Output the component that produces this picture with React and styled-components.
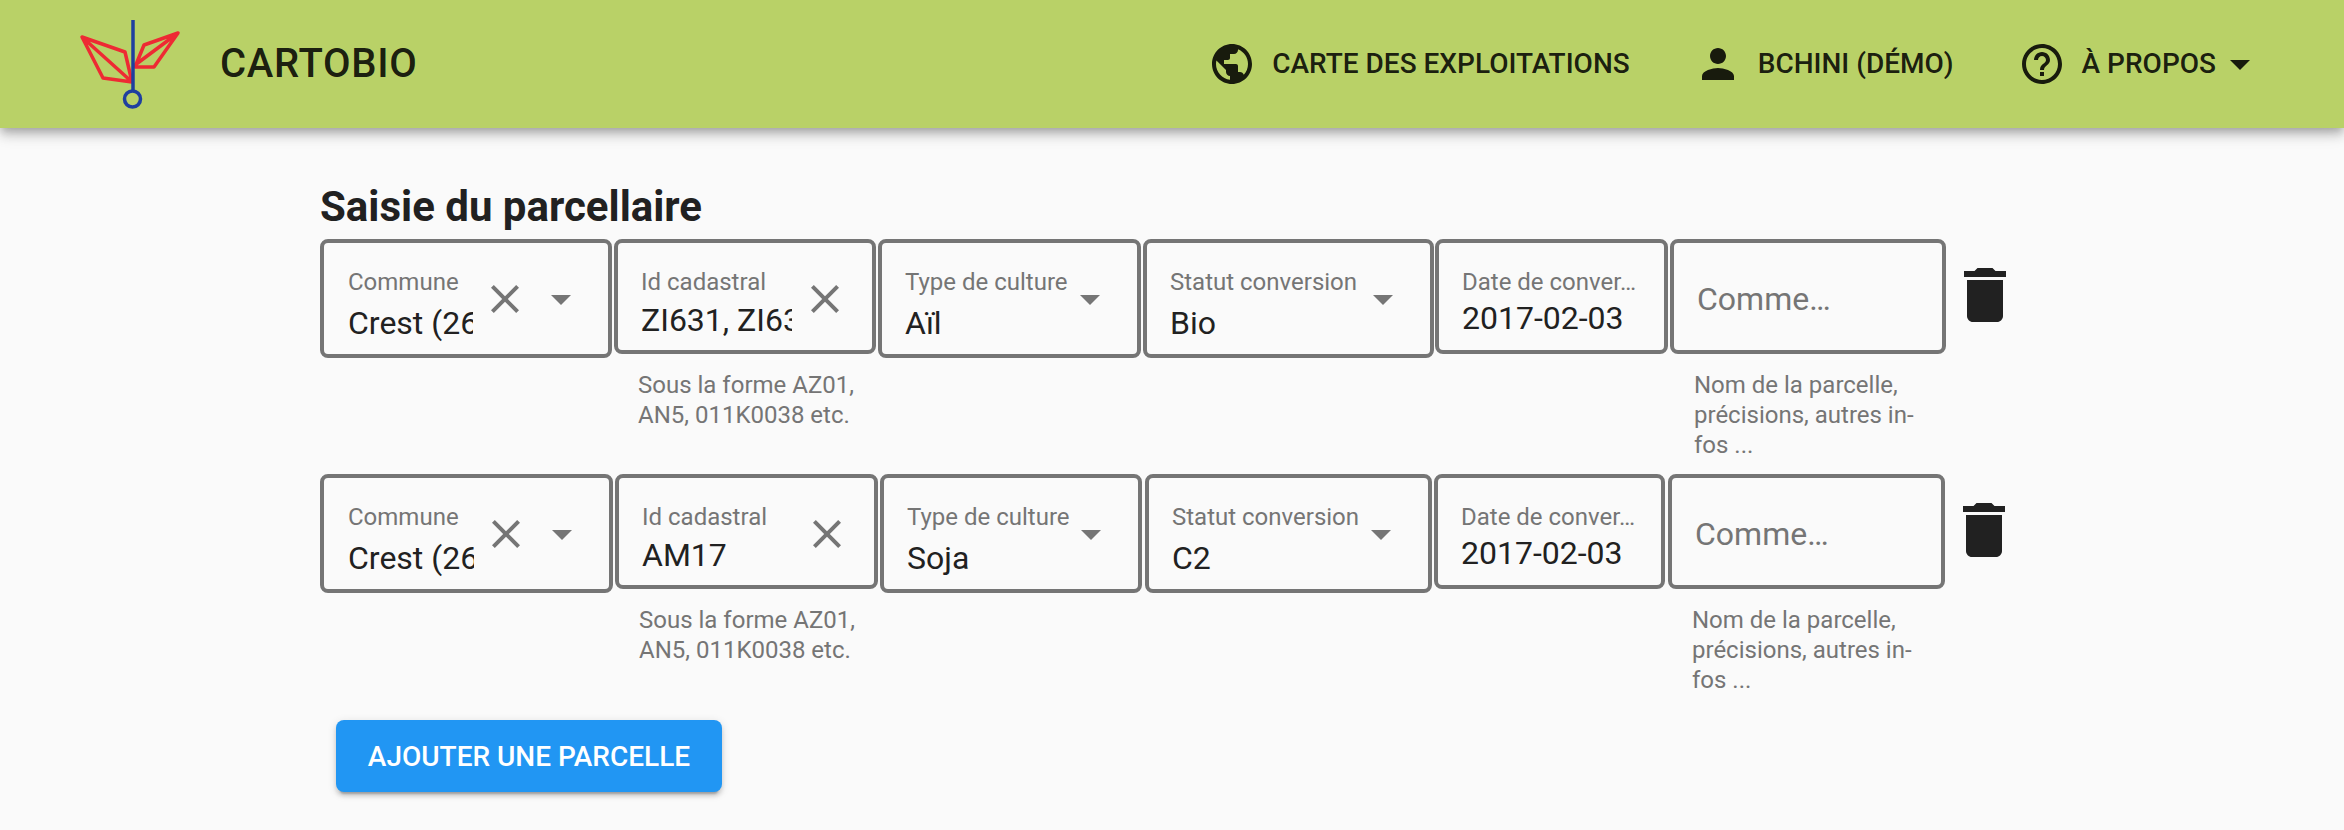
import { styled, createGlobalStyle } from "styled-components";

const GlobalStyle = createGlobalStyle`
html, body {
  margin: 0;
  padding: 0;
  background-color: #fafafa;
  font-family: Roboto, "Liberation Sans", sans-serif;
}
`;

const Page = styled.div`
width: 2344px;
height: 830px;
overflow: hidden;
`;

const Header = styled.header`
display: flex;
align-items: center;
height: 128px;
padding: 0 80px 0 60px;
box-sizing: border-box;
background-color: #b9d167;
color: rgba(0, 0, 0, 0.87);
box-shadow: 0 4px 8px -2px rgba(0, 0, 0, 0.2), 0 8px 10px 0 rgba(0, 0, 0, 0.14), 0 2px 20px 0 rgba(0, 0, 0, 0.12);
`;

const Logo = styled.svg`
width: 140px;
height: 110px;
flex: none;
margin-top: 2px;
`;

const Brand = styled.div`
margin-left: 20px;
font-size: 40px;
font-weight: 500;
letter-spacing: 0.7px;
line-height: 48px;
`;

const Nav = styled.nav`
display: flex;
align-items: center;
gap: 64px;
margin-left: auto;
`;

const NavItem = styled.div`
display: flex;
align-items: center;
gap: ${(p) => p.$gap}px;
font-size: 28px;
font-weight: 500;
line-height: 48px;
white-space: nowrap;
`;

const NavCaret = styled.svg`
width: 48px;
height: 48px;
margin-left: -16px;
fill: currentColor;
`;

const Icon = styled.svg`
width: 48px;
height: 48px;
flex: none;
fill: currentColor;
`;

const Main = styled.main`
padding: 53px 0 0 320px;
`;

const Title = styled.h1`
margin: 0 0 6px;
font-size: 42px;
font-weight: 700;
line-height: 52px;
color: #212121;
`;

const Row = styled.div`
display: flex;
align-items: flex-start;
margin-bottom: 14px;
`;

const FieldWrap = styled.div`
flex: none;
width: ${(p) => p.$w}px;
margin-left: ${(p) => p.$ml || 0}px;
`;

const Field = styled.div`
display: flex;
box-sizing: border-box;
height: ${(p) => p.$h}px;
padding: 0 23px 0 ${(p) => p.$pl || 23}px;
border: 4px solid #757575;
border-radius: 8px;
`;

const TextColumn = styled.div`
flex: 1;
min-width: 0;
overflow: hidden;
padding-top: 25px;
`;

const Label = styled.div`
font-size: 24px;
line-height: 28px;
color: #757575;
white-space: nowrap;
`;

const Value = styled.div`
margin-top: ${(p) => p.$mt}px;
font-size: 32px;
line-height: 38px;
color: #212121;
white-space: nowrap;
overflow: hidden;
`;

const Placeholder = styled.div`
padding-top: 37px;
font-size: 32px;
line-height: 38px;
color: #757575;
white-space: nowrap;
`;

const FieldIcon = styled.svg`
flex: none;
width: 48px;
height: 48px;
margin-top: 32px;
margin-left: ${(p) => p.$ml || 0}px;
fill: #757575;
`;

const Helper = styled.div`
margin-top: 16px;
padding: 0 12px 0 24px;
font-size: 24px;
line-height: 30px;
color: #757575;
`;

const TrashButton = styled.svg`
flex: none;
width: 72px;
height: 72px;
margin: 20px 0 0 3px;
fill: #212121;
`;

const AddButton = styled.button`
display: block;
box-sizing: border-box;
width: 386px;
height: 72px;
margin: 25px 0 0 16px;
padding: 0;
border: none;
border-radius: 8px;
background-color: #2196f3;
color: #ffffff;
font-family: inherit;
font-size: 28px;
font-weight: 500;
box-shadow: 0 6px 2px -4px rgba(0, 0, 0, 0.2), 0 4px 4px 0 rgba(0, 0, 0, 0.14), 0 2px 10px 0 rgba(0, 0, 0, 0.12);
`;

const CLEAR = "M19 6.41L17.59 5 12 10.59 6.41 5 5 6.41 10.59 12 5 17.59 6.41 19 12 13.41 17.59 19 19 17.59 13.41 12 19 6.41z";
const CARET = "M7 10l5 5 5-5z";
const TRASH = "M6 19c0 1.1.9 2 2 2h8c1.1 0 2-.9 2-2V7H6v12zM19 4h-3.5l-1-1h-5l-1 1H5v2h14V4z";
const GLOBE = "M12 2C6.48 2 2 6.48 2 12s4.48 10 10 10 10-4.48 10-10S17.52 2 12 2zm-1 17.93c-3.95-.49-7-3.85-7-7.93 0-.62.08-1.21.21-1.79L9 15v1c0 1.1.9 2 2 2v1.93zm6.9-2.54c-.26-.81-1-1.39-1.9-1.39h-1v-3c0-.55-.45-1-1-1H8v-2h2c.55 0 1-.45 1-1V7h2c1.1 0 2-.9 2-2v-.41c2.93 1.19 5 4.06 5 7.41 0 2.08-.8 3.97-2.1 5.39z";
const PERSON = "M12 12c2.21 0 4-1.79 4-4s-1.79-4-4-4-4 1.79-4 4 1.79 4 4 4zm0 2c-2.67 0-8 1.34-8 4v2h16v-2c0-2.66-5.33-4-8-4z";
const HELP = "M11 18h2v-2h-2v2zm1-16C6.48 2 2 6.48 2 12s4.48 10 10 10 10-4.48 10-10S17.52 2 12 2zm0 18c-4.41 0-8-3.59-8-8s3.59-8 8-8 8 3.59 8 8-3.59 8-8 8zm0-14c-2.21 0-4 1.79-4 4h2c0-1.1.9-2 2-2s2 .9 2 2c0 2-3 1.75-3 5h2c0-2.25 3-2.5 3-5 0-2.21-1.79-4-4-4z";

const rows = [
  {
    widths: [292, 262, 263, 291, 233, 276],
    gaps: [0, 2, 2, 2, 1, 2],
    cadastre: "ZI631, ZI632",
    culture: "Aïl",
    statut: "Bio",
  },
  {
    widths: [293, 263, 262, 287, 231, 277],
    gaps: [0, 2, 2, 3, 2, 3],
    cadastre: "AM17",
    culture: "Soja",
    statut: "C2",
  },
];

const SvgIcon = ({ d, as: Comp = FieldIcon, ...rest }) => (
  <Comp viewBox="0 0 24 24" {...rest}>
    <path d={d} />
  </Comp>
);

const Parcelle = ({ row }) => (
  <Row>
    <FieldWrap $w={row.widths[0]} $ml={row.gaps[0]}>
      <Field $h={119} $pl={24}>
        <TextColumn>
          <Label>Commune</Label>
          <Value $mt={8}>Crest (26400)</Value>
        </TextColumn>
        <SvgIcon d={CLEAR} $ml={8} />
        <SvgIcon d={CARET} $ml={8} />
      </Field>
    </FieldWrap>
    <FieldWrap $w={row.widths[1]} $ml={row.gaps[1]}>
      <Field $h={115}>
        <TextColumn>
          <Label>Id cadastral</Label>
          <Value $mt={5}>{row.cadastre}</Value>
        </TextColumn>
        <SvgIcon d={CLEAR} $ml={9} />
      </Field>
      <Helper>Sous la forme AZ01, AN5, 011K0038 etc.</Helper>
    </FieldWrap>
    <FieldWrap $w={row.widths[2]} $ml={row.gaps[2]}>
      <Field $h={119}>
        <TextColumn>
          <Label>Type de culture</Label>
          <Value $mt={8}>{row.culture}</Value>
        </TextColumn>
        <SvgIcon d={CARET} $ml={-40} />
      </Field>
    </FieldWrap>
    <FieldWrap $w={row.widths[3]} $ml={row.gaps[3]}>
      <Field $h={119}>
        <TextColumn>
          <Label>Statut conversion</Label>
          <Value $mt={8}>{row.statut}</Value>
        </TextColumn>
        <SvgIcon d={CARET} $ml={-40} />
      </Field>
    </FieldWrap>
    <FieldWrap $w={row.widths[4]} $ml={row.gaps[4]}>
      <Field $h={115}>
        <TextColumn>
          <Label>Date de conver…</Label>
          <Value $mt={3}>2017-02-03</Value>
        </TextColumn>
      </Field>
    </FieldWrap>
    <FieldWrap $w={row.widths[5]} $ml={row.gaps[5]}>
      <Field $h={115}>
        <Placeholder>Comme…</Placeholder>
      </Field>
      <Helper>Nom de la parcelle, précisions, autres in{"\u00AD"}fos ...</Helper>
    </FieldWrap>
    <SvgIcon as={TrashButton} d={TRASH} />
  </Row>
);

export default function App() {
  return (
    <Page>
      <GlobalStyle />
      <Header>
        <Logo viewBox="0 0 140 110">
          <g fill="none" stroke="#ee2a33" strokeWidth="3.5" strokeLinejoin="round">
            <path d="M22 27L65 42L72 72L43 68Z M22 27L72 72" />
            <path d="M118 23L84 35L75 57L94 57Z M118 23L75 55" />
          </g>
          <g fill="none" stroke="#1f3f9f" strokeWidth="3.5">
            <path d="M73 10L73 81" />
            <circle cx="72.5" cy="89" r="8" />
          </g>
        </Logo>
        <Brand>CARTOBIO</Brand>
        <Nav>
          <NavItem $gap={16}>
            <SvgIcon as={Icon} d={GLOBE} />
            CARTE DES EXPLOITATIONS
          </NavItem>
          <NavItem $gap={16}>
            <SvgIcon as={Icon} d={PERSON} />
            BCHINI (DÉMO)
          </NavItem>
          <NavItem $gap={16}>
            <SvgIcon as={Icon} d={HELP} />
            À PROPOS
            <SvgIcon as={NavCaret} d={CARET} />
          </NavItem>
        </Nav>
      </Header>
      <Main>
        <Title>Saisie du parcellaire</Title>
        {rows.map((row) => (
          <Parcelle key={row.cadastre} row={row} />
        ))}
        <AddButton>AJOUTER UNE PARCELLE</AddButton>
      </Main>
    </Page>
  );
}
